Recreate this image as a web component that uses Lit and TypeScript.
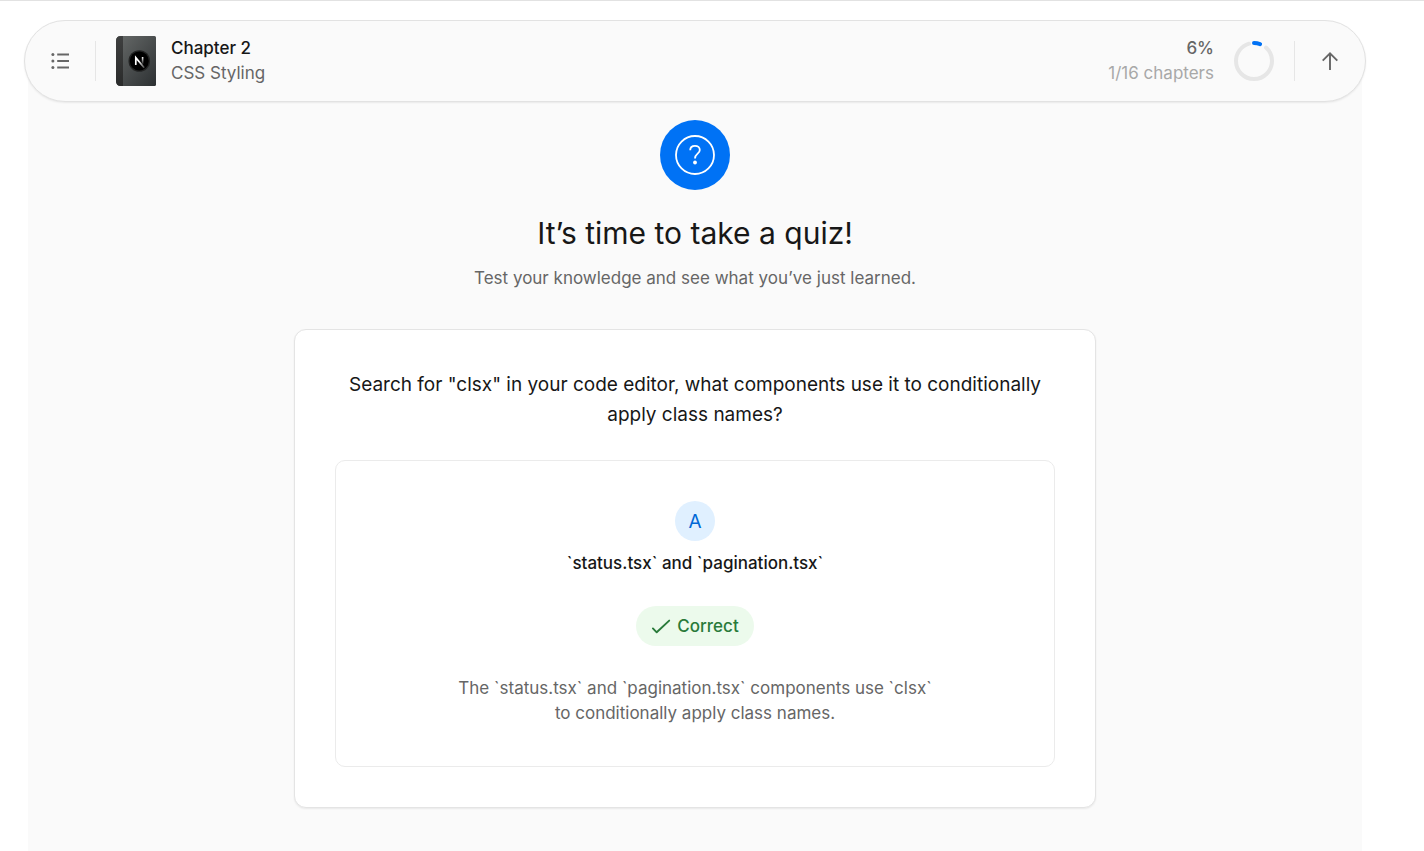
import { LitElement, html, css } from "lit";
import { customElement, property } from "lit/decorators.js";

@customElement("chapter-bar")
class ChapterBar extends LitElement {
  @property({ type: Number }) chapter = 1;
  @property({ type: Number }) total = 16;
  @property({ type: Number }) done = 0;
  @property() name = "";

  static styles = css`
    :host {
      display: block;
    }
    .bar {
      display: flex;
      align-items: center;
      box-sizing: border-box;
      padding: 15px 15px;
      border: 1px solid #e2e2e2;
      border-radius: 999px;
      background: #fafafa;
      box-shadow: 0 1px 2px rgba(0, 0, 0, 0.07);
    }
    .icon-button {
      display: grid;
      place-items: center;
      width: 40px;
      height: 40px;
      padding: 0;
      border: 0;
      border-radius: 50%;
      background: none;
      color: #666;
      cursor: pointer;
    }
    .divider {
      width: 1px;
      height: 40px;
      margin: 0 20px 0 15px;
      background: #e6e6e6;
    }
    .divider.end {
      margin: 0 15px 0 20px;
    }
    .book {
      display: block;
    }
    .label {
      flex: 1;
      margin-left: 15px;
      font-size: 17px;
      line-height: 25px;
    }
    .label p,
    .progress p {
      margin: 0;
    }
    .chapter {
      color: #171717;
      font-weight: 500;
    }
    .name {
      color: #666;
    }
    .progress {
      margin-right: 20px;
      text-align: right;
      font-size: 17px;
      line-height: 25px;
      color: #a8a8a8;
    }
    .percent {
      color: #666;
      font-weight: 500;
    }
    .ring {
      display: block;
    }
  `;

  render() {
    const percent = Math.floor((this.done / this.total) * 100);
    return html`
      <header class="bar">
        <button class="icon-button" type="button" aria-label="Open chapter list">
          <svg width="20" height="20" viewBox="0 0 20 20" fill="currentColor">
            <circle cx="2.900" cy="3.500" r="1.500" />
            <circle cx="2.900" cy="10" r="1.500" />
            <circle cx="2.900" cy="16.500" r="1.500" />
            <path d="M7.200 2.600H19v1.800H7.200zM7.200 9.100H19v1.800H7.200zM7.200 15.600H19v1.800H7.200z" />
          </svg>
        </button>
        <span class="divider"></span>
        <svg class="book" width="40" height="50" viewBox="0 0 40 50" aria-hidden="true">
          <defs>
            <linearGradient id="cover" x1="0" y1="0" x2="1" y2="1">
              <stop offset="0" stop-color="#686b6a" />
              <stop offset="1" stop-color="#2c3032" />
            </linearGradient>
            <linearGradient id="spine" x1="0" y1="0" x2="0" y2="1">
              <stop offset="0" stop-color="#3e3f3f" />
              <stop offset="1" stop-color="#2a2b2b" />
            </linearGradient>
            <linearGradient id="stem" x1="0" y1="0" x2="0" y2="1">
              <stop offset="0" stop-color="#fff" />
              <stop offset="1" stop-color="#fff" stop-opacity="0.1" />
            </linearGradient>
            <linearGradient id="slash" gradientUnits="userSpaceOnUse" x1="23" y1="25" x2="29" y2="32">
              <stop offset="0" stop-color="#fff" />
              <stop offset="1" stop-color="#fff" stop-opacity="0.2" />
            </linearGradient>
          </defs>
          <path d="M5 0H38.500Q40 0 40 1.500V48.500Q40 50 38.500 50H5Q0 50 0 45V5Q0 0 5 0Z" fill="url(#cover)" />
          <path d="M5 0H7V50H5Q0 50 0 45V5Q0 0 5 0Z" fill="url(#spine)" />
          <circle cx="23.300" cy="25" r="10.800" fill="#222323" />
          <circle cx="23.300" cy="25" r="9.500" fill="#000" />
          <path d="M19.800 29V21.600L28.200 31.700" fill="none" stroke="url(#slash)" stroke-width="1.700" />
          <path d="M25.800 21h1.600v7h-1.600z" fill="url(#stem)" />
        </svg>
        <div class="label">
          <p class="chapter">Chapter ${this.chapter}</p>
          <p class="name">${this.name}</p>
        </div>
        <div class="progress">
          <p class="percent">${percent}%</p>
          <p>${this.done}/${this.total} chapters</p>
        </div>
        <svg class="ring" width="40" height="40" viewBox="0 0 100 100" fill="none" stroke-width="10" stroke-linecap="round" aria-hidden="true">
          <g transform="rotate(-90 50 50)">
            <circle cx="50" cy="50" r="45" stroke="#e6e6e6" pathLength="100" stroke-dasharray="83.500 16.500" stroke-dashoffset="-11.600" />
            <circle cx="50" cy="50" r="45" stroke="#0072f5" pathLength="100" stroke-dasharray="${percent - 0.5} 100" />
          </g>
        </svg>
        <span class="divider end"></span>
        <button class="icon-button" type="button" aria-label="Back to top">
          <svg width="20" height="20" viewBox="0 0 20 20" fill="none" stroke="currentColor" stroke-width="1.900">
            <path d="M10 19V2.500M2.700 9.700L10 2.400L17.300 9.700" />
          </svg>
        </button>
      </header>
    `;
  }
}

@customElement("quiz-card")
class QuizCard extends LitElement {
  @property() question = "";
  @property() letter = "";
  @property() answer = "";
  @property() explanation = "";

  static styles = css`
    :host {
      display: block;
    }
    .card {
      box-sizing: border-box;
      padding: 40px;
      border: 1px solid #e4e4e4;
      border-radius: 12px;
      background: #fff;
      box-shadow: 0 1px 2px rgba(0, 0, 0, 0.07);
      text-align: center;
    }
    .question {
      margin: 0 0 30px;
      color: #171717;
      font-size: 19px;
      font-weight: 400;
      line-height: 30px;
    }
    .result {
      display: flex;
      flex-direction: column;
      align-items: center;
      padding: 40px;
      border: 1px solid #ebebeb;
      border-radius: 10px;
      font-size: 17px;
      line-height: 25px;
    }
    .letter {
      display: grid;
      place-items: center;
      width: 40px;
      height: 40px;
      border-radius: 50%;
      background: #e0f0ff;
      color: #0068d6;
      font-size: 19px;
    }
    .answer {
      margin: 10px 0 30px;
      color: #171717;
      font-weight: 500;
    }
    .badge {
      display: flex;
      align-items: center;
      gap: 6px;
      height: 40px;
      padding: 0 15px;
      border-radius: 20px;
      background: #ecfaec;
      color: #297a3a;
      font-weight: 500;
    }
    .explanation {
      max-width: 480px;
      margin: 30px 0 0;
      color: #666;
    }
  `;

  render() {
    return html`
      <section class="card">
        <h2 class="question">${this.question}</h2>
        <div class="result">
          <span class="letter">${this.letter}</span>
          <p class="answer">${this.answer}</p>
          <span class="badge">
            <svg width="20" height="20" viewBox="0 0 20 20" fill="none" stroke="currentColor" stroke-width="1.900" stroke-linecap="round" stroke-linejoin="round" aria-hidden="true">
              <path d="M1.900 12.400L5.700 16.300L18.200 4.600" />
            </svg>
            Correct
          </span>
          <p class="explanation">${this.explanation}</p>
        </div>
      </section>
    `;
  }
}

@customElement("app-root")
class AppRoot extends LitElement {
  static styles = css`
    :host {
      display: flex;
      flex-direction: column;
      box-sizing: border-box;
      min-height: 100vh;
      padding: 19px 58px 0 24px;
      border-top: 1px solid #e2e2e2;
      background: #fff;
      font-family: Inter, "Liberation Sans", sans-serif;
    }
    .bar {
      position: relative;
      z-index: 1;
    }
    .panel {
      display: flex;
      flex: 1;
      flex-direction: column;
      align-items: center;
      margin: -30px 4px 0;
      padding: 48px 20px 43px;
      background: #fafafa;
    }
    .mark {
      display: grid;
      place-items: center;
      width: 70px;
      height: 70px;
      border-radius: 50%;
      background: #0072f5;
    }
    .title {
      margin: 23px 0 0;
      color: #171717;
      font-size: 30px;
      font-weight: 400;
      line-height: 40px;
      text-align: center;
    }
    .subtitle {
      margin: 13px 0 38px;
      color: #666;
      font-size: 17px;
      line-height: 25px;
      text-align: center;
    }
    .quiz {
      width: 100%;
      max-width: 802px;
    }
  `;

  render() {
    return html`
      <chapter-bar class="bar" chapter="2" name="CSS Styling" done="1" total="16"></chapter-bar>
      <main class="panel">
        <span class="mark">
          <svg width="40" height="40" viewBox="0 0 40 40" fill="none" stroke="#fff" stroke-width="1.800" aria-hidden="true">
            <circle cx="20" cy="20" r="19" />
            <path d="M15.200 15.200C15.200 12.400 17.200 10.800 20 10.800C22.800 10.800 24.800 12.600 24.800 15C24.800 18.800 20 18.600 20 23.400" />
            <circle cx="20" cy="27.500" r="1.900" fill="#fff" stroke="none" />
          </svg>
        </span>
        <h1 class="title">It’s time to take a quiz!</h1>
        <p class="subtitle">Test your knowledge and see what you’ve just learned.</p>
        <quiz-card
          class="quiz"
          question='Search for "clsx" in your code editor, what components use it to conditionally apply class names?'
          letter="A"
          answer="\`status.tsx\` and \`pagination.tsx\`"
          explanation="The \`status.tsx\` and \`pagination.tsx\` components use \`clsx\` to conditionally apply class names."
        ></quiz-card>
      </main>
    `;
  }
}
